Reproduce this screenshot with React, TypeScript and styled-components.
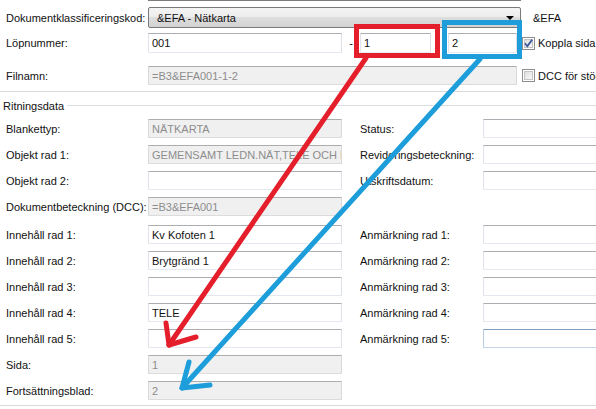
import styled, { createGlobalStyle } from "styled-components";

const GlobalStyle = createGlobalStyle`
  html, body {
    margin: 0;
    padding: 0;
    background: #fff;
  }
`;

const Page = styled.div`
  position: relative;
  width: 596px;
  height: 409px;
  overflow: hidden;
  background: #fff;
  font-family: "Liberation Sans", Arial, sans-serif;
  font-size: 11px;
  color: #111;
  display: flex;
  flex-direction: column;
`;

const TopEdge = styled.div`
  margin-left: 148px;
  width: 373px;
  height: 1px;
  background: #7c7c7c;
`;

const Row = styled.div<{ $top: number; $h: number }>`
  display: flex;
  align-items: center;
  margin-top: ${(p) => p.$top}px;
  height: ${(p) => p.$h}px;
  white-space: nowrap;
`;

const Label = styled.div<{ $w?: number; $pad?: number }>`
  flex: none;
  box-sizing: border-box;
  width: ${(p) => p.$w ?? 148}px;
  padding-left: ${(p) => p.$pad ?? 6}px;
  white-space: nowrap;
`;

const Combo = styled.div`
  position: relative;
  box-sizing: border-box;
  width: 373px;
  height: 21px;
  border: 1px solid #7a7a7a;
  border-radius: 2px;
  background: linear-gradient(#f4f4f4 0%, #ececec 50%, #dedede 50%, #d2d2d2 100%);
  padding-left: 8px;
  display: flex;
  align-items: center;
`;

const ComboArrow = styled.span`
  position: absolute;
  right: 6px;
  top: 8px;
  width: 0;
  height: 0;
  border-left: 4px solid transparent;
  border-right: 4px solid transparent;
  border-top: 4px solid #000;
`;

const Aside = styled.span`
  margin-left: 12px;
`;

const TextBox = styled.div<{ $w: number; $h?: number; $disabled?: boolean; $focus?: boolean }>`
  flex: none;
  box-sizing: border-box;
  width: ${(p) => p.$w}px;
  height: ${(p) => p.$h ?? 19}px;
  padding: 0 3px;
  display: flex;
  align-items: center;
  overflow: hidden;
  white-space: nowrap;
  border: 1px solid;
  border-radius: 1px;
  border-color: ${(p) =>
    p.$disabled
      ? "#adadad #d9d9d9 #dcdcdc #d9d9d9"
      : p.$focus
      ? "#7f9cc0 #b9cde2 #c3d5e8 #b9cde2"
      : "#abadb3 #dcdfe6 #e3e9ef #e2e3ea"};
  background: ${(p) => (p.$disabled ? "#f0f0f0" : "#fff")};
  color: ${(p) => (p.$disabled ? "#8d8d8d" : "#111")};
`;

const Dash = styled.span`
  width: 18px;
  text-align: center;
  flex: none;
`;

const Gap = styled.span<{ $w: number }>`
  width: ${(p) => p.$w}px;
  flex: none;
`;

const CheckLabel = styled.label`
  display: flex;
  align-items: center;
  gap: 3px;
  margin-left: 5px;
  flex: none;
`;

const Separator = styled.div<{ $top: number }>`
  margin-top: ${(p) => p.$top}px;
  height: 1px;
  background: #d9d9d9;
`;

const GroupHeader = styled.div`
  margin-top: 7px;
  height: 13px;
  display: flex;
  align-items: center;
  gap: 3px;
  padding-left: 3px;
  &::after {
    content: "";
    flex: 1;
    height: 1px;
    margin-top: -1px;
    background: #dadfe3;
  }
`;

const FormGrid = styled.div<{ $top: number }>`
  display: grid;
  grid-template-columns: 148px 194px 141px 130px;
  grid-auto-rows: 19px;
  row-gap: 7px;
  align-items: center;
  margin-top: ${(p) => p.$top}px;
  white-space: nowrap;
`;

const Overlay = styled.svg`
  position: absolute;
  left: 0;
  top: 0;
  pointer-events: none;
`;

const CheckBox = ({ checked }: { checked?: boolean }) => (
  <svg width="13" height="13" viewBox="0 0 13 13">
    <defs>
      <linearGradient id="cbg" x1="0" y1="0" x2="1" y2="1">
        <stop offset="0" stopColor="#dcdcdc" />
        <stop offset="1" stopColor="#fbfbfb" />
      </linearGradient>
    </defs>
    <rect x="0.5" y="0.5" width="12" height="12" fill="#fff" stroke="#8e8f8f" />
    <rect x="2.5" y="2.5" width="8" height="8" fill="url(#cbg)" stroke="#c4c4c4" />
    {checked && (
      <path d="M3 6.3 L5.3 9.3 L10.2 2.6" fill="none" stroke="#3f5a9a" strokeWidth="1.8" />
    )}
  </svg>
);

type Line = { label: string; value?: string; disabled?: boolean; right?: string; rightFocus?: boolean };

const upper: Line[] = [
  { label: "Blankettyp:", value: "NÄTKARTA", disabled: true, right: "Status:" },
  {
    label: "Objekt rad 1:",
    value: "GEMENSAMT LEDN.NÄT,TELE OCH DATA",
    disabled: true,
    right: "Revideringsbeteckning:",
  },
  { label: "Objekt rad 2:", value: "", right: "Utskriftsdatum:" },
  { label: "Dokumentbeteckning (DCC):", value: "=B3&EFA001", disabled: true },
];

const lower: Line[] = [
  { label: "Innehåll rad 1:", value: "Kv Kofoten 1", right: "Anmärkning rad 1:" },
  { label: "Innehåll rad 2:", value: "Brytgränd 1", right: "Anmärkning rad 2:" },
  { label: "Innehåll rad 3:", value: "", right: "Anmärkning rad 3:" },
  { label: "Innehåll rad 4:", value: "TELE", right: "Anmärkning rad 4:" },
  { label: "Innehåll rad 5:", value: "", right: "Anmärkning rad 5:", rightFocus: true },
  { label: "Sida:", value: "1", disabled: true },
  { label: "Fortsättningsblad:", value: "2", disabled: true },
];

const renderLines = (lines: Line[]) =>
  lines.flatMap((l) => [
    <Label key={l.label}>{l.label}</Label>,
    <TextBox key={l.label + "-v"} $w={194} $disabled={l.disabled}>
      {l.value}
    </TextBox>,
    <Label key={l.label + "-r"} $w={141} $pad={18}>
      {l.right ?? ""}
    </Label>,
    l.right ? (
      <TextBox key={l.label + "-rv"} $w={130} $focus={l.rightFocus} />
    ) : (
      <span key={l.label + "-rv"} />
    ),
  ]);

const RED = "#e41f2b";
const BLUE = "#1d9edb";

export default function App() {
  return (
    <>
      <GlobalStyle />
      <Page>
        <TopEdge />
        <Row $top={6} $h={21}>
          <Label>Dokumentklassificeringskod:</Label>
          <Combo>
            &amp;EFA - Nätkarta
            <ComboArrow />
          </Combo>
          <Aside>&amp;EFA</Aside>
        </Row>
        <Row $top={5} $h={20}>
          <Label>Löpnummer:</Label>
          <TextBox $w={194} $h={20}>001</TextBox>
          <Dash>-</Dash>
          <TextBox $w={71} $h={20}>1</TextBox>
          <Gap $w={17} />
          <TextBox $w={69} $h={20}>2</TextBox>
          <CheckLabel>
            <CheckBox checked />
            Koppla sida
          </CheckLabel>
        </Row>
        <Row $top={13} $h={19}>
          <Label>Filnamn:</Label>
          <TextBox $w={369} $disabled>
            =B3&amp;EFA001-1-2
          </TextBox>
          <CheckLabel>
            <CheckBox />
            DCC för stöd
          </CheckLabel>
        </Row>
        <Separator $top={6} />
        <GroupHeader>Ritningsdata</GroupHeader>
        <FormGrid $top={7}>{renderLines(upper)}</FormGrid>
        <FormGrid $top={9}>{renderLines(lower)}</FormGrid>
        <Separator $top={5} />

        <Overlay width="596" height="409" viewBox="0 0 596 409">
          <rect x="356.5" y="26.5" width="81" height="29" fill="none" stroke={RED} strokeWidth="5" />
          <rect x="444.5" y="22.5" width="75" height="34" fill="none" stroke={BLUE} strokeWidth="5" />
          <g fill="none" stroke={RED} strokeWidth="5" strokeLinecap="round" strokeLinejoin="round">
            <path d="M366 58 L169 345" />
            <path d="M166 323 L169 345 L196 337" />
          </g>
          <g fill="none" stroke={BLUE} strokeWidth="5" strokeLinecap="round" strokeLinejoin="round">
            <path d="M480 59 L182 388" />
            <path d="M189 362 L182 388 L210 385" />
          </g>
        </Overlay>
      </Page>
    </>
  );
}
